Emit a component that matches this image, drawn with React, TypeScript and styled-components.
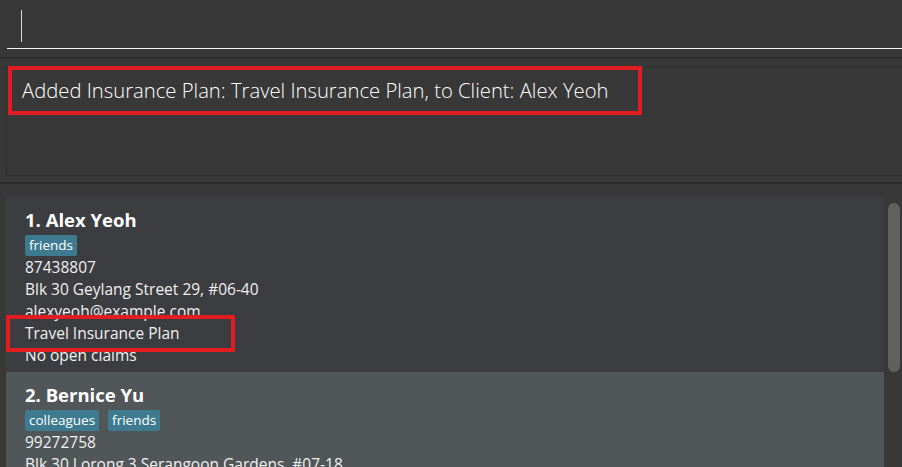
import styled, { createGlobalStyle } from "styled-components";

const GlobalStyle = createGlobalStyle`
  html, body {
    margin: 0;
    padding: 0;
    background: #383838;
    overflow: hidden;
  }
  body {
    font-family: "Open Sans", "Noto Sans", sans-serif;
    color: #ffffff;
  }
`;

interface Person {
  name: string;
  tags: string[];
  phone: string;
  address: string;
  email: string;
  plan: string;
  claims: string;
}

const persons: Person[] = [
  {
    name: "Alex Yeoh",
    tags: ["friends"],
    phone: "87438807",
    address: "Blk 30 Geylang Street 29, #06-40",
    email: "alexyeoh@example.com",
    plan: "Travel Insurance Plan",
    claims: "No open claims",
  },
  {
    name: "Bernice Yu",
    tags: ["colleagues", "friends"],
    phone: "99272758",
    address: "Blk 30 Lorong 3 Serangoon Gardens, #07-18",
    email: "berniceyu@example.com",
    plan: "No plans",
    claims: "No open claims",
  },
];

const App = () => {
  return (
    <Window>
      <GlobalStyle />
      <CommandBar>
        <CommandInput>
          <Caret />
        </CommandInput>
      </CommandBar>
      <Divider />
      <ResultPane>
        <ResultBox>
          <ResultText>
            Added Insurance Plan: Travel Insurance Plan, to Client: Alex Yeoh
          </ResultText>
          <Highlight $left={1} $top={-1} $width={634} $height={49} />
        </ResultBox>
      </ResultPane>
      <Divider />
      <ListArea>
        <CardList>
          {persons.map((p, i) => (
            <Card key={p.name} $odd={i % 2 === 1}>
              <Name>
                {i + 1}. {p.name}
              </Name>
              <Tags>
                {p.tags.map((t) => (
                  <Tag key={t}>{t}</Tag>
                ))}
              </Tags>
              <Field>{p.phone}</Field>
              <Field>{p.address}</Field>
              <Field>{p.email}</Field>
              <PlanField>
                {p.plan}
                {i === 0 && (
                  <Highlight $left={-19} $top={-7} $width={229} $height={37} />
                )}
              </PlanField>
              <Field>{p.claims}</Field>
            </Card>
          ))}
        </CardList>
        <ScrollTrack>
          <ScrollThumb />
        </ScrollTrack>
      </ListArea>
    </Window>
  );
};

const Window = styled.div`
  width: 902px;
  height: 467px;
  display: flex;
  flex-direction: column;
  background: #383838;
  overflow: hidden;
`;

const CommandBar = styled.div`
  height: 57px;
  padding: 0 0 0 7px;
  box-sizing: border-box;
`;

const CommandInput = styled.div`
  height: 49px;
  border-bottom: 1.5px solid #f2f2f2;
  display: flex;
  align-items: flex-start;
  padding: 10px 0 0 14px;
  box-sizing: border-box;
`;

const Caret = styled.span`
  display: block;
  width: 1px;
  height: 32px;
  background: #d8d8d8;
`;

const Divider = styled.div`
  height: 2px;
  background: #2c2c2c;
`;

const ResultPane = styled.div`
  height: 123px;
  padding: 7px 0 6px 6px;
  box-sizing: border-box;
`;

const ResultBox = styled.div`
  position: relative;
  height: 100%;
  border: 1px solid #2e2e2e;
  border-right: none;
  padding: 9px 0 0 15px;
  box-sizing: border-box;
`;

const ResultText = styled.div`
  font-size: 20.25px;
  font-weight: 300;
  line-height: 28px;
  color: #ffffff;
`;

const Highlight = styled.div<{
  $left: number;
  $top: number;
  $width: number;
  $height: number;
}>`
  position: absolute;
  left: ${(p) => p.$left}px;
  top: ${(p) => p.$top}px;
  width: ${(p) => p.$width}px;
  height: ${(p) => p.$height}px;
  border: 4.5px solid #e21d22;
  box-sizing: border-box;
  pointer-events: none;
`;

const ListArea = styled.div`
  flex: 1;
  display: flex;
  padding: 13px 2px 0 6px;
  gap: 4px;
  min-height: 0;
`;

const CardList = styled.div`
  flex: 1;
  display: flex;
  flex-direction: column;
`;

const Card = styled.div<{ $odd: boolean }>`
  background: ${(p) => (p.$odd ? "#515658" : "#3c3d40")};
  padding: 10px 0 6px 19px;
  display: flex;
  flex-direction: column;
`;

const Name = styled.div`
  font-size: 18.5px;
  font-weight: 700;
  line-height: 25px;
  color: #ffffff;
`;

const Tags = styled.div`
  display: flex;
  gap: 9px;
  margin: 3px 0 0;
`;

const Tag = styled.span`
  background: #3e7b91;
  color: #ffffff;
  font-size: 13.5px;
  line-height: 21px;
  padding: 0 4px;
  border-radius: 2px;
`;

const Field = styled.div`
  font-size: 15.5px;
  line-height: 22px;
  color: #f0f0f0;
`;

const PlanField = styled(Field)`
  position: relative;
`;

const ScrollTrack = styled.div`
  width: 12px;
  padding-top: 6px;
`;

const ScrollThumb = styled.div`
  height: 169px;
  background: #606060;
  border-radius: 6px;
`;

export default App;
